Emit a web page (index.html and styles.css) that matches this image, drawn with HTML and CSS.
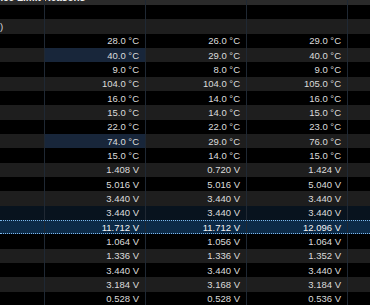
FILE: index.html
```html
<!DOCTYPE html>
<html lang="en">
<head>
  <meta charset="UTF-8">
  <title>Sensors</title>
  <link rel="stylesheet" href="styles.css">
</head>
<body>
  <div class="grid">
    <div class="row section"><div class="cell name"><span class="title">Performance Limit Reasons</span></div><div class="cell"></div><div class="cell"></div><div class="cell"></div><div class="cell end"></div></div>
    <div class="row"><div class="cell name"></div><div class="cell"></div><div class="cell"></div><div class="cell"></div><div class="cell end"></div></div>
    <div class="row alt"><div class="cell name">)</div><div class="cell"></div><div class="cell"></div><div class="cell"></div><div class="cell end"></div></div>

    <div class="row"><div class="cell name"></div><div class="cell">28.0 °C</div><div class="cell">26.0 °C</div><div class="cell">29.0 °C</div><div class="cell end"></div></div>
    <div class="row alt"><div class="cell name"></div><div class="cell mark">40.0 °C</div><div class="cell">29.0 °C</div><div class="cell">40.0 °C</div><div class="cell end"></div></div>
    <div class="row"><div class="cell name"></div><div class="cell">9.0 °C</div><div class="cell">8.0 °C</div><div class="cell">9.0 °C</div><div class="cell end"></div></div>
    <div class="row alt"><div class="cell name"></div><div class="cell">104.0 °C</div><div class="cell">104.0 °C</div><div class="cell">105.0 °C</div><div class="cell end"></div></div>
    <div class="row"><div class="cell name"></div><div class="cell">16.0 °C</div><div class="cell">14.0 °C</div><div class="cell">16.0 °C</div><div class="cell end"></div></div>
    <div class="row alt"><div class="cell name"></div><div class="cell">15.0 °C</div><div class="cell">14.0 °C</div><div class="cell">15.0 °C</div><div class="cell end"></div></div>
    <div class="row"><div class="cell name"></div><div class="cell">22.0 °C</div><div class="cell">22.0 °C</div><div class="cell">23.0 °C</div><div class="cell end"></div></div>
    <div class="row alt"><div class="cell name"></div><div class="cell mark">74.0 °C</div><div class="cell">29.0 °C</div><div class="cell">76.0 °C</div><div class="cell end"></div></div>
    <div class="row"><div class="cell name"></div><div class="cell">15.0 °C</div><div class="cell">14.0 °C</div><div class="cell">15.0 °C</div><div class="cell end"></div></div>
    <div class="row alt"><div class="cell name"></div><div class="cell">1.408 V</div><div class="cell">0.720 V</div><div class="cell">1.424 V</div><div class="cell end"></div></div>
    <div class="row"><div class="cell name"></div><div class="cell">5.016 V</div><div class="cell">5.016 V</div><div class="cell">5.040 V</div><div class="cell end"></div></div>
    <div class="row alt"><div class="cell name"></div><div class="cell">3.440 V</div><div class="cell">3.440 V</div><div class="cell">3.440 V</div><div class="cell end"></div></div>
    <div class="row hover"><div class="cell name"></div><div class="cell">3.440 V</div><div class="cell">3.440 V</div><div class="cell">3.440 V</div><div class="cell end"></div></div>
    <div class="row selected"><div class="cell name"></div><div class="cell">11.712 V</div><div class="cell">11.712 V</div><div class="cell">12.096 V</div><div class="cell end"></div></div>
    <div class="row"><div class="cell name"></div><div class="cell">1.064 V</div><div class="cell">1.056 V</div><div class="cell">1.064 V</div><div class="cell end"></div></div>
    <div class="row alt"><div class="cell name"></div><div class="cell">1.336 V</div><div class="cell">1.336 V</div><div class="cell">1.352 V</div><div class="cell end"></div></div>
    <div class="row"><div class="cell name"></div><div class="cell">3.440 V</div><div class="cell">3.440 V</div><div class="cell">3.440 V</div><div class="cell end"></div></div>
    <div class="row alt"><div class="cell name"></div><div class="cell">3.184 V</div><div class="cell">3.168 V</div><div class="cell">3.184 V</div><div class="cell end"></div></div>
    <div class="row"><div class="cell name"></div><div class="cell">0.528 V</div><div class="cell">0.528 V</div><div class="cell">0.536 V</div><div class="cell end"></div></div>
  </div>
</body>
</html>
```

FILE: styles.css
```css
body {
  margin: 0;
  background-color: #000;
  color: #dcdcdc;
  font-family: 'Liberation Sans', sans-serif;
  font-size: 9.5px;
  overflow: hidden;
}

.grid {
  margin-top: -9.33px;
}

.row {
  display: flex;
  height: 14.33px;
  box-sizing: border-box;
  background-color: #000;
}

.row.alt {
  background-color: #1e1e1e;
}

.row.section {
  background-color: #2a2a2a;
  color: #f0f0f0;
}

.row.hover {
  background-color: #08131e;
}

.row.selected {
  background-color: #0c2a47;
  border-top: 1px dotted #7db8ec;
  border-bottom: 1px dotted #7db8ec;
  color: #f2f2f2;
}

.cell {
  width: 101px;
  flex-shrink: 0;
  border-left: 1px solid #1f2833;
  display: flex;
  align-items: center;
  justify-content: flex-end;
  padding-right: 6px;
  box-sizing: border-box;
  white-space: nowrap;
}

.cell.name {
  width: 44px;
  border-left: none;
  padding-right: 0;
  justify-content: flex-start;
  overflow: hidden;
}

.row.section .cell.name {
  overflow: visible;
}

.title {
  font-weight: bold;
  font-size: 10px;
  margin-left: -47px;
}

.cell.end {
  flex: 1;
  padding-right: 0;
}

.cell.mark {
  background-color: #18263a;
}
```
